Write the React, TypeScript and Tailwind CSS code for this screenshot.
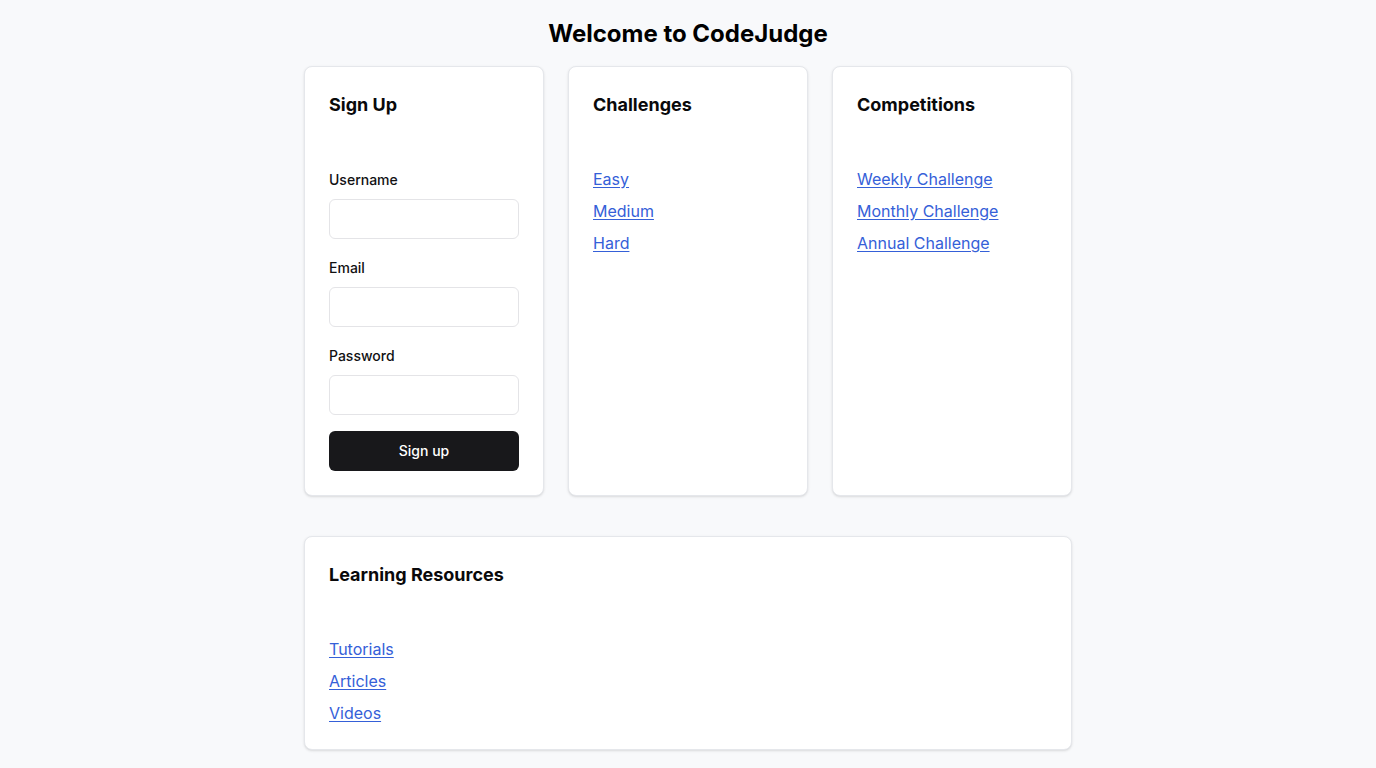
import React from "react";

function Card({ title, children }: { title: string; children: React.ReactNode }) {
  return (
    <div className="rounded-lg border border-[#e5e7eb] bg-white p-6 shadow-sm">
      <h2 className="text-lg leading-7 font-bold text-[#09090b]">{title}</h2>
      <div className="mt-[48px]">{children}</div>
    </div>
  );
}

function Links({ items }: { items: string[] }) {
  return (
    <ul className="space-y-2">
      {items.map((t) => (
        <li key={t}>
          <a href="#" className="text-base leading-6 text-[#3560d8] underline underline-offset-2">
            {t}
          </a>
        </li>
      ))}
    </ul>
  );
}

function Field({ label, type }: { label: string; type: string }) {
  return (
    <div>
      <label className="mb-[7px] block pt-px text-sm leading-6 font-medium text-[#111113]">{label}</label>
      <input
        type={type}
        className="block h-10 w-full rounded-md border border-[#e4e4e7] bg-white px-3 text-sm outline-none"
      />
    </div>
  );
}

export default function App() {
  return (
    <div
      className="min-h-screen bg-[#f8f9fb] pt-[18px] pb-6"
      style={{ fontFamily: "Inter, 'Noto Sans', sans-serif" }}
    >
      <div className="mx-auto w-[768px]">
        <h1 className="mb-4 text-center text-2xl leading-8 font-bold text-black">Welcome to CodeJudge</h1>
        <div className="grid grid-cols-3 gap-6">
          <Card title="Sign Up">
            <div className="space-y-4">
              <Field label="Username" type="text" />
              <Field label="Email" type="email" />
              <Field label="Password" type="password" />
              <button className="h-10 w-full rounded-md bg-[#18181b] text-sm font-medium text-white">
                Sign up
              </button>
            </div>
          </Card>
          <Card title="Challenges">
            <Links items={["Easy", "Medium", "Hard"]} />
          </Card>
          <Card title="Competitions">
            <Links items={["Weekly Challenge", "Monthly Challenge", "Annual Challenge"]} />
          </Card>
        </div>
        <div className="mt-10">
          <Card title="Learning Resources">
            <Links items={["Tutorials", "Articles", "Videos"]} />
          </Card>
        </div>
      </div>
    </div>
  );
}
